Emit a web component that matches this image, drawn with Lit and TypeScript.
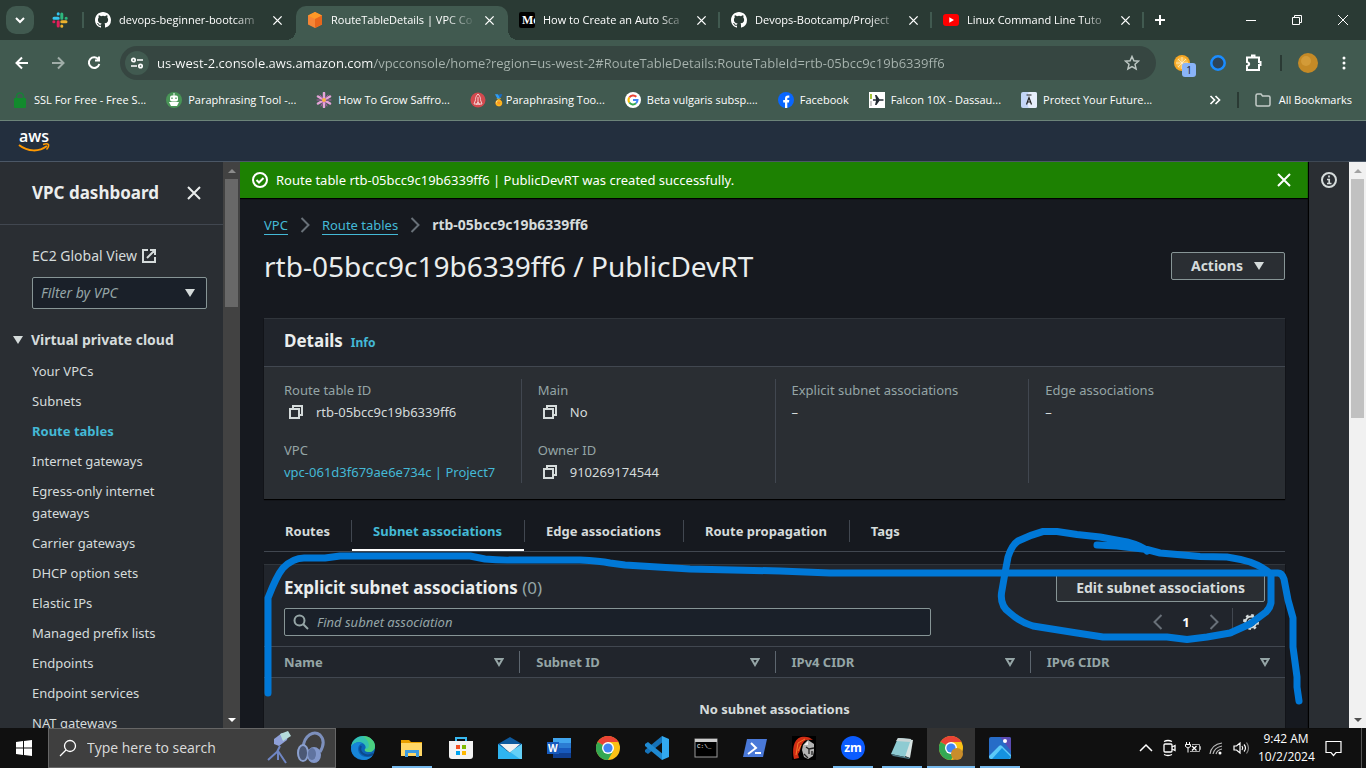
import { LitElement, html, css, svg } from "lit";
import { customElement, state } from "lit/decorators.js";
import { classMap } from "lit/directives/class-map.js";

const cross = (size: number, width: number) => html`<svg width=${size} height=${size} viewBox="0 0 16 16" fill="none" stroke="currentColor" stroke-width=${width}><path d="M2 2l12 12M14 2L2 14"/></svg>`;

const githubIcon = html`<svg width="16" height="16" viewBox="0 0 16 16" fill="#fff"><path d="M8 0C3.58 0 0 3.58 0 8c0 3.54 2.29 6.53 5.47 7.59.4.07.55-.17.55-.38 0-.19-.01-.82-.01-1.49-2.01.37-2.53-.49-2.69-.94-.09-.23-.48-.94-.82-1.13-.28-.15-.68-.52-.01-.53.63-.01 1.08.58 1.23.82.72 1.21 1.87.87 2.33.66.07-.52.28-.87.51-1.07-1.78-.2-3.64-.89-3.64-3.95 0-.87.31-1.59.82-2.15-.08-.2-.36-1.02.08-2.12 0 0 .67-.21 2.2.82a7.6 7.6 0 014 0c1.53-1.04 2.2-.82 2.2-.82.44 1.1.16 1.92.08 2.12.51.56.82 1.27.82 2.15 0 3.07-1.87 3.75-3.65 3.95.29.25.54.73.54 1.48 0 1.07-.01 1.93-.01 2.2 0 .21.15.46.55.38A8.01 8.01 0 0016 8c0-4.42-3.58-8-8-8z"/></svg>`;

const slackIcon = html`<svg width="16" height="16" viewBox="0 0 16 16" stroke-width="3" stroke-linecap="round"><path d="M6.2 1.8v.1M2 6.2h4.2" stroke="#36c5f0"/><path d="M9.8 2v4.2M14.2 6.2h-.1" stroke="#2eb67d"/><path d="M14 9.8H9.8M9.8 14.2v-.1" stroke="#ecb22e"/><path d="M6.2 14V9.8M1.8 9.8h.1" stroke="#e01e5a"/></svg>`;

const vpcIcon = html`<svg width="16" height="16" viewBox="0 0 16 16"><path d="M8 0l7 3.5v9L8 16l-7-3.500v-9z" fill="#f58536"/><path d="M1 3.500L8 0l7 3.500L8 7z" fill="#fd9827"/><path d="M8 7l7-3.500v9L8 16z" fill="#e8661b"/></svg>`;

const mediumIcon = html`<svg width="16" height="16" viewBox="0 0 16 16"><rect width="16" height="16" rx="2" fill="#000"/><text x="3" y="12" font-family="Liberation Serif, serif" font-weight="bold" font-size="12" fill="#fff">Mc</text></svg>`;

const youtubeIcon = html`<svg width="16" height="16" viewBox="0 0 16 16"><rect y="2" width="16" height="12" rx="3" fill="#f00"/><path d="M6.300 5.300L11 8l-4.700 2.700z" fill="#fff"/></svg>`;

const chromeIcon = (badge = false) => html`<svg width="24" height="24" viewBox="0 0 24 24"><circle cx="12" cy="12" r="12" fill="#fbc116"/><path d="M12 12L1.600 6A12 12 0 0 1 22.400 6z" fill="#ea4335"/><path d="M12 12L1.600 6A12 12 0 0 0 12 24l5.200-9z" fill="#34a853"/><path d="M12 6h10.400L17 14z" fill="#fbc116"/><circle cx="12" cy="12" r="6" fill="#fff"/><circle cx="12" cy="12" r="4.600" fill="#4285f4"/>${badge ? svg`<circle cx="18" cy="18" r="6" fill="#c98d2b"/>` : ""}</svg>`;

const copyIcon = html`<svg width="16" height="16" viewBox="0 0 16 16" fill="none" stroke="currentColor" stroke-width="2"><path d="M2 5h9v9H2z"/><path d="M5 5V2h9v9h-3"/></svg>`;

const chevron = (flip = false, size = 16) => html`<svg width=${size} height=${size} viewBox="0 0 16 16" fill="none" stroke="currentColor" stroke-width="2"><path d=${flip ? "M11.500 1L4.500 8l7 7" : "M4.500 1l7 7-7 7"}/></svg>`;

const solidTriangle = html`<svg width="12" height="10" viewBox="0 0 12 10"><path d="M1 1h10L6 9z" fill="currentColor"/></svg>`;

const openTriangle = html`<svg width="10" height="9" viewBox="0 0 10 9"><path d="M1.500 1h7L5 7z" fill="none" stroke="currentColor" stroke-width="2"/></svg>`;

const TABS = [
  { title: "devops-beginner-bootcam", icon: githubIcon, active: false, rule: false },
  { title: "RouteTableDetails | VPC Co", icon: vpcIcon, active: true, rule: false },
  { title: "How to Create an Auto Sca", icon: mediumIcon, active: false, rule: true },
  { title: "Devops-Bootcamp/Project", icon: githubIcon, active: false, rule: true },
  { title: "Linux Command Line Tuto", icon: youtubeIcon, active: false, rule: true },
];

const BOOKMARKS = [
  { label: "SSL For Free - Free S...", icon: html`<svg width="16" height="16" viewBox="0 0 16 16"><path d="M4.500 7V4.500a3.500 3.500 0 0 1 7 0V7" fill="none" stroke="#188038" stroke-width="1.500"/><rect x="2" y="6" width="12" height="10" rx="1" fill="#128a2d"/></svg>` },
  { label: "Paraphrasing Tool -...", icon: html`<svg width="16" height="16" viewBox="0 0 16 16"><circle cx="8" cy="8" r="8" fill="#499557"/><path d="M8 1v3" stroke="#fff"/><rect x="4" y="3.500" width="8" height="6" rx="2" fill="#fff"/><path d="M6 5.500v1.500M10 5.500v1.500" stroke="#499557" stroke-width="1.300"/><path d="M3 10h10l-2 4H5z" fill="#fff"/></svg>` },
  { label: "How To Grow Saffro...", icon: html`<svg width="16" height="16" viewBox="0 0 16 16" stroke-linecap="round"><path d="M8 1v14M2 4.500l12 7M14 4.500l-12 7" stroke="#e5a4d8" stroke-width="2.500"/><path d="M8 8L4 3M8 8l4-5M8 8H1M8 8h7M8 8l-3 6M8 8l3 6" stroke="#b05aa8"/><circle cx="8" cy="8" r="2" fill="#f6b33f"/></svg>` },
  { label: "🏅Paraphrasing Too...", icon: html`<svg width="16" height="16" viewBox="0 0 16 16"><circle cx="8" cy="8" r="7.500" fill="#d3494e"/><path d="M8 2c3 3 2.500 6 2.500 6l1.500 4H4l1.500-4S5 5 8 2zM8 5v8M6 13l2-3 2 3" fill="none" stroke="#f5cfd0"/></svg>` },
  { label: "Beta vulgaris subsp....", icon: html`<svg width="16" height="16" viewBox="0 0 16 16" fill="none" stroke-width="2"><circle cx="8" cy="8" r="8" fill="#fff" stroke="none"/><path d="M4.300 5.500A4.500 4.500 0 0 1 11.300 4.800" stroke="#ea4335"/><path d="M4.300 5.500a4.500 4.500 0 0 0 0 5" stroke="#fbbc05"/><path d="M4.300 10.500a4.500 4.500 0 0 0 6.700.800" stroke="#34a853"/><path d="M11 11.300A4.500 4.500 0 0 0 12.500 8H8" stroke="#4285f4"/></svg>` },
  { label: "Facebook", icon: html`<svg width="16" height="16" viewBox="0 0 16 16"><circle cx="8" cy="8" r="8" fill="#0866ff"/><path d="M7 16v-5.500H5.200V8H7V6.700C7 4.500 8 3.500 10 3.500l1.300.1v2.100h-1C9.500 5.700 9.300 6 9.300 6.800V8h2l-.4 2.500H9.300V16z" fill="#fff"/></svg>` },
  { label: "Falcon 10X - Dassau...", icon: html`<svg width="16" height="16" viewBox="0 0 16 16"><rect width="16" height="16" fill="#fff"/><path d="M1 2h2v5H1z" fill="#a6c43c"/><path d="M1 9h2v5H1z" fill="#ccc"/><path d="M4 7.300h3L6 3h1.500l3 4.300H14l1 .700-1 .700h-3.500l-3 4.300H6l1-4.300H4z" fill="#222b33"/></svg>` },
  { label: "Protect Your Future...", icon: html`<svg width="16" height="16" viewBox="0 0 16 16"><rect width="16" height="16" rx="2" fill="#c3d6f6"/><rect x="7" width="9" height="16" rx="2" fill="#e6eefb"/><path d="M5.500 3h5M5.500 12.500L8 5.500l2.500 7M6.500 10h3" fill="none" stroke="#222" stroke-width="1.200"/></svg>` },
];

const NAV = ["Your VPCs", "Subnets", "Route tables", "Internet gateways", "Egress-only internet gateways", "Carrier gateways", "DHCP option sets", "Elastic IPs", "Managed prefix lists", "Endpoints", "Endpoint services", "NAT gateways"];

const SECTIONS = ["Routes", "Subnet associations", "Edge associations", "Route propagation", "Tags"];

const COLUMNS = ["Name", "Subnet ID", "IPv4 CIDR", "IPv6 CIDR"];

const APPS = [
  { name: "Edge", state: "", icon: html`<svg width="24" height="24" viewBox="0 0 24 24"><circle cx="12" cy="12" r="12" fill="#0c64b8"/><path d="M0 11C1 4 6 0 12 0c7 0 12 5 12 10 0 4-3 6-6 6-3 0-5-1-4-3 1-1 1-3-1-5C9 5 3 6 0 11z" fill="#33c1b0"/><path d="M12 0c7 0 12 5 12 10 0 4-3 6-6 6-3 0-5-1-4-3 5 1 6-7-2-13z" fill="#54d66c" opacity=".7"/><path d="M0 12c1-5 7-7 12-5-6 1-7 9-1 13 4 2 8 1 11-1-3 5-9 6-13 4C3 22 0 17 0 12z" fill="#1785d8"/><path d="M10 10c-3 6 4 12 12 8" fill="none" stroke="#0c4a8c" stroke-width="2"/></svg>` },
  { name: "File Explorer", state: "open", icon: html`<svg width="24" height="24" viewBox="0 0 24 24"><path d="M1 4h8l2 2h11v14H1z" fill="#e9a000"/><path d="M1 7h21v13H1z" fill="#ffd766"/><path d="M5 21v-7h14v7h-3v-4H8v4z" fill="#3d9be0"/></svg>` },
  { name: "Store", state: "", icon: html`<svg width="24" height="24" viewBox="0 0 24 24"><path d="M7 6V2h10v4" fill="none" stroke="#38b8ef" stroke-width="2"/><path d="M0 5h24v15a3 3 0 0 1-3 3H3a3 3 0 0 1-3-3z" fill="#f3f3f3"/><path d="M7 9h4v4H7z" fill="#f25022"/><path d="M13 9h4v4h-4z" fill="#7fba00"/><path d="M7 15h4v4H7z" fill="#00a4ef"/><path d="M13 15h4v4h-4z" fill="#ffb900"/></svg>` },
  { name: "Mail", state: "", icon: html`<svg width="24" height="24" viewBox="0 0 24 24"><path d="M0 8l12-7 12 7v6H0z" fill="#0e5a9e"/><path d="M2 8h20l-10 9z" fill="#f1f1f1"/><path d="M0 8l12 9 12-9v15H0z" fill="#2fb4f0"/><path d="M24 8L12 16l10 7h2z" fill="#64d0f7"/></svg>` },
  { name: "Word", state: "", icon: html`<svg width="24" height="24" viewBox="0 0 24 24"><path d="M6 2h18v5H6z" fill="#41a5ee"/><path d="M6 7h18v5H6z" fill="#2b7cd3"/><path d="M6 12h18v5H6z" fill="#185abd"/><path d="M6 17h18v5H6z" fill="#103f91"/><path d="M0 6h12v12H0z" fill="#185abd"/><text x="1" y="16" font-family="Open Sans, sans-serif" font-weight="bold" font-size="10" fill="#fff">W</text></svg>` },
  { name: "Chrome", state: "", icon: chromeIcon() },
  { name: "Visual Studio Code", state: "", icon: html`<svg width="24" height="24" viewBox="0 0 24 24"><path d="M17 0l2 5L3 18l-3-2v-2z" fill="#1572b8"/><path d="M17 24l2-5L3 6 0 8v2z" fill="#1f8ad2"/><path d="M17 0l7 3v18l-7 3z" fill="#32a9f0"/></svg>` },
  { name: "Command Prompt", state: "", icon: html`<svg width="24" height="24" viewBox="0 0 24 24"><rect x="1" y="3" width="22" height="18" fill="#000" stroke="#999"/><path d="M1 3h22v3H1z" fill="#ccc"/><text x="3" y="12" font-family="Liberation Mono, monospace" font-size="6" fill="#fff">C:\\_</text></svg>` },
  { name: "PowerShell", state: "", icon: html`<svg width="24" height="24" viewBox="0 0 24 24"><path d="M4 3h20l-4 18H0z" fill="#4a79d8"/><path d="M8 7l5 5-8 6M12 17h6" fill="none" stroke="#fff" stroke-width="2"/></svg>` },
  { name: "Knight", state: "", icon: html`<svg width="24" height="24" viewBox="0 0 24 24"><rect width="24" height="24" fill="#000"/><path d="M2 23C0 15 1 3 9 1c5-1 9 0 12 3-5-1-9 0-10 3-3 3-2 8-5 11l1 4z" fill="#d22d14"/><path d="M4 19L6 7l7-4M6 15l3-6" fill="none" stroke="#f47b2a"/><path d="M11 9l5-5 6 4v7l-1 5-5 3-4-2-2-7z" fill="#b4b4b4"/><path d="M14 11l3 2 5-1M17 13v5M20 15v4M12 18l4 4" fill="none" stroke="#222" stroke-width="1.300"/><path d="M12 9l4-4v4z" fill="#eee"/></svg>` },
  { name: "Zoom", state: "open", icon: html`<svg width="24" height="24" viewBox="0 0 24 24"><circle cx="12" cy="12" r="12" fill="#0b5cff"/><text x="12" y="16" text-anchor="middle" font-family="Open Sans, sans-serif" font-weight="bold" font-size="12" fill="#fff">zm</text></svg>` },
  { name: "Notepad", state: "open", icon: html`<svg width="24" height="24" viewBox="0 0 24 24"><path d="M8 2l15 2-3 18-5-2z" fill="#d8e4e2"/><path d="M8 2l13 1-6 18L1 18z" fill="#8ecbd2"/><path d="M8 2l13 1-1 3L6 5z" fill="#c9d4d4"/><path d="M1 18l14 3 5 1-1 1-16-3z" fill="#4d7884"/></svg>` },
  { name: "Chrome window", state: "current", icon: chromeIcon(true) },
  { name: "Photos", state: "open", icon: html`<svg width="24" height="24" viewBox="0 0 24 24"><rect x="1" y="1" width="22" height="22" rx="2" fill="#276cc7"/><path d="M12 1h9a2 2 0 0 1 2 2v12z" fill="#5b4bb3"/><path d="M1 20l10-10a2 2 0 0 1 3 0l9 9v2a2 2 0 0 1-2 2H3a2 2 0 0 1-2-2z" fill="#5cc9f7"/><path d="M4 23L14 12l9 9-2 2z" fill="#1592e0"/><circle cx="17" cy="5" r="2" fill="#fff"/></svg>` },
];

@customElement("browser-chrome")
class BrowserChrome extends LitElement {
  static styles = css`
    :host { display: block; font: 11px/16px "Open Sans", "Noto Sans", sans-serif; color: #fff; background: #415a50; border-bottom: 1px solid #6c8479; }
    button { font: inherit; color: inherit; background: none; border: 0; padding: 0; display: grid; place-items: center; }
    svg { display: block; flex: none; }
    .strip { display: flex; height: 40px; background: #2a3a34; align-items: flex-end; }
    .chooser { width: 28px; height: 28px; border-radius: 10px; background: #415a50; margin: 0 0 6px 6px; }
    .pinned { width: 48px; height: 40px; padding-left: 4px; }
    .rule { width: 2px; height: 16px; background: #415a50; flex: none; }
    .strip > .rule { margin-bottom: 12px; }
    .tab { position: relative; display: flex; align-items: center; gap: 8px; flex: 0 1 212px; min-width: 0; height: 34px; padding: 0 13px 6px 11px; box-sizing: border-box; }
    .tab .title { flex: 1; min-width: 0; overflow: hidden; white-space: nowrap; mask-image: linear-gradient(90deg, #000 115px, transparent 145px); }
    .tab .end { position: absolute; right: 0; top: 6px; }
    .active { background: #415a50; border-radius: 10px 10px 0 0; }
    .active::before, .active::after { content: ""; position: absolute; bottom: 0; width: 10px; height: 10px; }
    .active::before { left: -10px; background: radial-gradient(circle at 0 0, transparent 10px, #415a50 10px); }
    .active::after { right: -10px; background: radial-gradient(circle at 100% 0, transparent 10px, #415a50 10px); }
    .add { width: 32px; height: 40px; }
    .window { display: flex; margin-left: auto; }
    .window button { width: 46px; height: 40px; }
    .toolbar { display: flex; align-items: center; height: 40px; box-sizing: border-box; padding: 6px 4px 0 4px; }
    .toolbar > button { width: 36px; height: 34px; }
    .dim { opacity: .5; }
    .address { display: flex; align-items: center; flex: 1; height: 34px; margin: 0 8px 0 8px; padding: 0 16px 0 5px; border-radius: 17px; background: #364641; gap: 8px; }
    .site { width: 24px; height: 24px; border-radius: 12px; background: #415a50; }
    .address input { flex: 1; min-width: 0; border: 0; outline: 0; padding: 0; font: 13px/20px "Open Sans", "Noto Sans", sans-serif; color: transparent; background: linear-gradient(90deg, #fff 217px, #a9b5b0 217px); background-clip: text; -webkit-background-clip: text; }
    .badge { position: relative; }
    .count { position: absolute; right: 4px; bottom: 3px; width: 14px; height: 14px; border-radius: 3px; background: #8ab4f8; color: #202124; font-size: 10px; line-height: 14px; text-align: center; }
    .bar { width: 2px; height: 16px; background: #2a3a34; margin: 0 8px; }
    .bookmarks { display: flex; align-items: center; height: 40px; padding: 0 14px 0 12px; }
    .bookmarks a { display: flex; align-items: center; gap: 6px; color: inherit; text-decoration: none; white-space: nowrap; margin-right: 20px; }
    .bookmarks .more { margin-left: auto; width: 28px; height: 28px; }
    .bookmarks a.all { margin: 0 0 0 8px; gap: 8px; }
  `;

  render() {
    return html`
      <div class="strip">
        <button class="chooser" aria-label="Search tabs"><svg width="16" height="16" viewBox="0 0 16 16" fill="none" stroke="#fff" stroke-width="2"><path d="M4 6l4 4 4-4"/></svg></button>
        <button class="pinned" aria-label="Slack">${slackIcon}</button>
        <span class="rule"></span>
        ${TABS.map((t) => html`<div class=${classMap({ tab: true, active: t.active })}>
          ${t.icon}<span class="title">${t.title}</span>
          <button aria-label="Close tab">${cross(11, 2)}</button>
          ${t.rule ? html`<span class="rule end"></span>` : ""}
        </div>`)}
        <button class="add" aria-label="New tab"><svg width="12" height="12" viewBox="0 0 12 12" stroke="#fff" stroke-width="2"><path d="M6 1v10M1 6h10"/></svg></button>
        <div class="window">
          <button aria-label="Minimize"><svg width="10" height="10" viewBox="0 0 10 10" stroke="#fff"><path d="M0 5.500h10"/></svg></button>
          <button aria-label="Restore"><svg width="10" height="10" viewBox="0 0 10 10" fill="none" stroke="#fff"><path d="M.5 2.500h7v7h-7zM2.500 2.500v-2h7v7h-2"/></svg></button>
          <button aria-label="Close"><svg width="10" height="10" viewBox="0 0 10 10" stroke="#fff"><path d="M0 0l10 10M10 0L0 10"/></svg></button>
        </div>
      </div>
      <div class="toolbar">
        <button aria-label="Back"><svg width="16" height="16" viewBox="0 0 16 16" fill="none" stroke="#fff" stroke-width="2"><path d="M14 8H3M8 2.500L2.500 8 8 13.500"/></svg></button>
        <button class="dim" aria-label="Forward"><svg width="16" height="16" viewBox="0 0 16 16" fill="none" stroke="#fff" stroke-width="2"><path d="M2 8h11M8 2.500L13.500 8 8 13.500"/></svg></button>
        <button aria-label="Reload"><svg width="16" height="16" viewBox="0 0 16 16" fill="none" stroke="#fff" stroke-width="2"><path d="M12.500 4.500A5.300 5.300 0 1 0 13.300 9M13 1.500v4H9"/></svg></button>
        <div class="address">
          <button class="site" aria-label="Site information"><svg width="14" height="14" viewBox="0 0 14 14" fill="none" stroke="#fff" stroke-width="1.700"><circle cx="3.500" cy="4" r="1.700"/><path d="M7 4h6M1 10h6"/><circle cx="10.500" cy="10" r="1.700"/></svg></button>
          <input aria-label="Address" value="us-west-2.console.aws.amazon.com/vpcconsole/home?region=us-west-2#RouteTableDetails:RouteTableId=rtb-05bcc9c19b6339ff6">
          <button aria-label="Bookmark"><svg width="16" height="16" viewBox="0 0 16 16" fill="none" stroke="#bcc6c2" stroke-width="1.500"><path d="M8 1.500l1.900 4.300 4.600.4-3.500 3.100 1.100 4.600L8 11.500l-4.100 2.400L5 9.300 1.500 6.200l4.600-.4z"/></svg></button>
        </div>
        <button class="badge" aria-label="Extension, 1 item"><svg width="16" height="16" viewBox="0 0 16 16"><circle cx="8" cy="8" r="8" fill="#f5a623"/><circle cx="8" cy="8" r="6" fill="#fbbf4d"/><path d="M8 2v12M2 8h12M4 4l8 8M12 4l-8 8" stroke="#fff3d6" stroke-width=".7"/></svg><span class="count">1</span></button>
        <button aria-label="Extension"><svg width="16" height="16" viewBox="0 0 16 16"><circle cx="8" cy="8" r="6.700" fill="#2d4357" stroke="#1a8cff" stroke-width="2.500"/></svg></button>
        <button aria-label="Extensions"><svg width="18" height="18" viewBox="0 0 18 18" fill="none" stroke="#fff" stroke-width="2"><path d="M2 3.500h12v4.500h1.500v3H14v5H2v-4c3-1 3-3 0-4z"/><path d="M7 3V1.500h2.500V3"/></svg></button>
        <span class="bar"></span>
        <button aria-label="Profile"><svg width="20" height="20" viewBox="0 0 20 20"><circle cx="10" cy="10" r="10" fill="#c58a26"/><circle cx="8" cy="8" r="5" fill="#d39b38"/></svg></button>
        <button aria-label="Menu"><svg width="4" height="16" viewBox="0 0 4 16" fill="#fff"><circle cx="2" cy="3" r="1.500"/><circle cx="2" cy="8" r="1.500"/><circle cx="2" cy="13" r="1.500"/></svg></button>
      </div>
      <div class="bookmarks">
        ${BOOKMARKS.map((b) => html`<a href="#">${b.icon}<span>${b.label}</span></a>`)}
        <button class="more" aria-label="More bookmarks"><svg width="12" height="10" viewBox="0 0 12 10" fill="none" stroke="#fff" stroke-width="1.700"><path d="M1.500 1l4 4-4 4M6.500 1l4 4-4 4"/></svg></button>
        <span class="bar"></span>
        <a class="all" href="#"><svg width="16" height="14" viewBox="0 0 16 14" fill="none" stroke="#c3ccc8" stroke-width="1.500"><path d="M1 2.500a1.500 1.500 0 0 1 1.500-1.500H6l1.500 2h6A1.500 1.500 0 0 1 15 4.500v7a1.500 1.500 0 0 1-1.500 1.500h-11A1.500 1.500 0 0 1 1 11.500z"/></svg><span>All Bookmarks</span></a>
      </div>`;
  }
}

@customElement("aws-console")
class AwsConsole extends LitElement {
  @state() section = "Subnet associations";

  static styles = css`
    :host { display: flex; flex-direction: column; font: 13px/22px "Noto Sans", "Open Sans", sans-serif; color: #d5dbdb; min-height: 0; }
    button, input, select { font: inherit; color: inherit; }
    button { background: none; border: 0; padding: 0; }
    a { color: #44b9d6; text-decoration: none; }
    svg { display: block; flex: none; }
    .top { height: 40px; flex: none; background: #232f3e; border-bottom: 1px solid #4b5766; display: flex; align-items: center; padding-left: 18px; }
    .page { display: flex; flex: 1; min-height: 0; }
    .side { flex: 0 0 223px; background: #2a2e33; overflow: hidden; }
    .side header { display: flex; align-items: center; height: 62px; padding-left: 32px; border-bottom: 1px solid #414750; gap: 27px; color: #eaeded; }
    .side h2 { margin: 0; font-size: 17px; }
    .links { padding: 20px 16px 0 32px; }
    .links a { color: #d5dbdb; }
    .links .ec2 { display: flex; align-items: center; gap: 5px; font-size: 14px; }
    .filter { display: grid; margin-top: 10px; align-items: center; }
    .filter select { grid-area: 1 / 1; appearance: none; height: 32px; border: 1px solid #879596; border-radius: 2px; background: #1a2029; padding: 0 8px; font-style: italic; font-size: 14px; color: #95a5a6; }
    .filter svg { grid-area: 1 / 1; justify-self: end; margin-right: 11px; pointer-events: none; }
    .group { display: flex; align-items: center; gap: 7px; margin: 20px 0 9px -20px; font-size: 14px; font-weight: bold; }
    .links ul { list-style: none; margin: 0; padding: 0; display: grid; gap: 8px; }
    .links ul a { display: block; padding-right: 36px; }
    .links ul a.on { color: #44b9d6; font-weight: bold; }
    .scroll { flex: 0 0 17px; display: flex; flex-direction: column; align-items: center; background: #424242; color: #8b8b8b; box-sizing: border-box; }
    .scroll svg { padding: 7px 0 6px; }
    .scroll i { width: 13px; background: #686868; flex: 0 0 128px; margin-bottom: auto; }
    .scroll.light { background: #f1f1f1; }
    .scroll.light i { background: #c1c1c1; flex-basis: 239px; }
    .main { position: relative; flex: 1; min-width: 0; background: #16191f; overflow: hidden; }
    .flash { display: flex; align-items: center; height: 36px; background: #1d8102; color: #fff; padding: 0 17px 0 12px; gap: 8px; box-shadow: 0 1px 1px #000; }
    .flash button { margin-left: auto; }
    .content { padding: 16px 24px 0; }
    .crumbs { display: flex; align-items: center; gap: 8px; font-weight: bold; }
    .crumbs svg { color: #687078; margin: 0 1px; }
    .crumbs a { font-weight: normal; line-height: 18px; border-bottom: 1px solid #44b9d6; }
    .crumbs span { font-size: 14px; }
    .head { display: flex; align-items: center; justify-content: space-between; height: 60px; }
    h1 { margin: 0; font-size: 28px; line-height: 36px; font-weight: normal; color: #eaeded; }
    .btn { height: 28px; padding: 0 19px; border: 1px solid #879596; border-radius: 2px; background: #2a2e33; font-size: 14px; font-weight: bold; display: flex; align-items: center; gap: 10px; }
    .card { background: #2a2e33; border-top: 1px solid #30353b; box-shadow: 0 1px 1px #000; }
    .details { margin-top: 22px; }
    .details header { display: flex; align-items: baseline; gap: 8px; line-height: 44px; padding-left: 20px; background: #21252c; border-bottom: 1px solid #414750; box-sizing: border-box; height: 48px; }
    h3 { margin: 0; font-size: 17px; color: #eaeded; }
    .info { font-size: 12px; font-weight: bold; }
    .facts { display: grid; grid-template-columns: repeat(4, 1fr); padding: 12px 3px 16px; }
    .facts dl { margin: 0; padding-left: 16px; border-left: 1px solid #414750; height: 104px; }
    .facts dl:first-child { border-color: transparent; }
    .facts dt { color: #95a5a6; }
    .facts dd { margin: 0 0 16px; display: flex; align-items: center; gap: 12px; white-space: nowrap; }
    .facts button { margin-left: 4px; }
    .tabs { display: flex; border-bottom: 1px solid #414750; margin-top: 13px; height: 39px; }
    .tabs button { position: relative; font-weight: bold; padding: 0 22px 2px; height: 39px; }
    .tabs button:first-child { padding-left: 21px; padding-right: 21px; }
    .tabs button + button::before { content: ""; position: absolute; left: 0; top: 8px; height: 22px; width: 1px; background: #414750; }
    .tabs button.on { color: #44b9d6; }
    .tabs button.on::after { content: ""; position: absolute; left: 1px; right: 0; bottom: 0; height: 2px; background: #fff; }
    .assoc { margin-top: 12px; }
    .tools { background: #21252c; padding: 9px 20px 10px; }
    .row { display: flex; align-items: center; justify-content: space-between; }
    .row h3 { line-height: 28px; }
    .row h3 span { color: #95a5a6; font-weight: normal; }
    .row + .row { margin-top: 6px; }
    .find { display: flex; align-items: center; gap: 8px; box-sizing: border-box; flex: 0 0 66%; height: 28px; border: 1px solid #879596; border-radius: 2px; background: #1a2029; padding: 0 8px; color: #95a5a6; }
    .find input { flex: 1; background: none; border: 0; outline: 0; padding: 0; }
    .find input::placeholder { color: #95a5a6; font-style: italic; }
    .pager { display: flex; align-items: center; color: #687078; padding-right: 5px; }
    .pager button, .pager b { width: 28px; display: grid; place-items: center; }
    .pager b { color: #fff; }
    .pager .gear { color: #d5dbdb; margin-left: 4px; border-left: 1px solid #414750; height: 28px; padding-left: 8px; }
    table { width: 100%; border-collapse: collapse; table-layout: fixed; }
    thead { background: #21252c; }
    th { padding: 4px 0; text-align: left; color: #95a5a6; border: solid #414750; border-width: 1px 0; }
    th div { display: flex; align-items: center; justify-content: space-between; height: 22px; padding: 0 15px 0 16px; border-left: 1px solid #5d666f; }
    th:first-child div { border-color: transparent; padding-left: 19px; }
    td { text-align: center; font-weight: bold; padding: 20px 0 60px; }
    .rail { flex: 0 0 40px; background: #2a2e33; box-shadow: -1px 0 1px #000; position: relative; display: flex; justify-content: center; align-items: flex-start; padding-top: 10px; box-sizing: border-box; }
    .ink { position: absolute; left: 0; top: 0; width: 1069px; height: 566px; pointer-events: none; }
  `;

  scrollbar(light: boolean) {
    return html`<div class=${classMap({ scroll: true, light })} aria-hidden="true">
      <svg width="8" height="4" viewBox="0 0 8 4" fill=${light ? "#a3a3a3" : "currentColor"}><path d="M4 0l4 4H0z"/></svg><i></i>
      <svg width="8" height="4" viewBox="0 0 8 4" fill=${light ? "#505050" : "#fff"}><path d="M0 0h8L4 4z"/></svg></div>`;
  }

  render() {
    return html`
      <div class="top"><svg width="32" height="26" viewBox="0 0 32 26" overflow="visible"><text x="1" y="14" font-family="Open Sans, sans-serif" font-weight="600" font-size="16" fill="#fff">aws</text><path d="M1 17c9 7 20 7 28 1" fill="none" stroke="#f90" stroke-width="2"/><path d="M25 16.500c3-1 5-.5 5.500 0 .3 1-.5 3.500-2 5" fill="none" stroke="#f90" stroke-width="1.500"/></svg></div>
      <div class="page">
        <nav class="side">
          <header><h2>VPC dashboard</h2><button aria-label="Close navigation">${cross(16, 2)}</button></header>
          <div class="links">
            <a class="ec2" href="#">EC2 Global View <svg width="14" height="14" viewBox="0 0 14 14" fill="none" stroke="currentColor" stroke-width="2"><path d="M6 1H1v12h12V8M8 1h5v5M13 1L5 9"/></svg></a>
            <div class="filter"><select aria-label="Filter by VPC"><option>Filter by VPC</option></select>${solidTriangle}</div>
            <div class="group">${solidTriangle}<span>Virtual private cloud</span></div>
            <ul>${NAV.map((n) => html`<li><a href="#" class=${classMap({ on: n === "Route tables" })}>${n}</a></li>`)}</ul>
          </div>
        </nav>
        ${this.scrollbar(false)}
        <main class="main">
          <div class="flash"><svg width="16" height="16" viewBox="0 0 16 16" fill="none" stroke="#fff" stroke-width="2"><circle cx="8" cy="8" r="7"/><path d="M4.500 8l2.500 2.500 4.500-4.500"/></svg>
            <span>Route table rtb-05bcc9c19b6339ff6 | PublicDevRT was created successfully.</span>
            <button aria-label="Dismiss">${cross(16, 2)}</button></div>
          <div class="content">
            <div class="crumbs"><a href="#">VPC</a>${chevron()}<a href="#">Route tables</a>${chevron()}<span>rtb-05bcc9c19b6339ff6</span></div>
            <div class="head"><h1>rtb-05bcc9c19b6339ff6 / PublicDevRT</h1><button class="btn">Actions ${solidTriangle}</button></div>
            <section class="card details">
              <header><h3>Details</h3><a class="info" href="#">Info</a></header>
              <div class="facts">
                <dl><dt>Route table ID</dt><dd><button aria-label="Copy ID">${copyIcon}</button>rtb-05bcc9c19b6339ff6</dd><dt>VPC</dt><dd><a href="#">vpc-061d3f679ae6e734c | Project7</a></dd></dl>
                <dl><dt>Main</dt><dd><button aria-label="Copy main">${copyIcon}</button>No</dd><dt>Owner ID</dt><dd><button aria-label="Copy owner">${copyIcon}</button>910269174544</dd></dl>
                <dl><dt>Explicit subnet associations</dt><dd>–</dd></dl>
                <dl><dt>Edge associations</dt><dd>–</dd></dl>
              </div>
            </section>
            <div class="tabs" role="tablist">${SECTIONS.map((s) => html`<button role="tab" aria-selected=${s === this.section} class=${classMap({ on: s === this.section })} @click=${() => (this.section = s)}>${s}</button>`)}</div>
            <section class="card assoc">
              <div class="tools">
                <div class="row"><h3>Explicit subnet associations <span>(0)</span></h3><button class="btn">Edit subnet associations</button></div>
                <div class="row">
                  <label class="find"><svg width="16" height="16" viewBox="0 0 16 16" fill="none" stroke="currentColor" stroke-width="2"><circle cx="6.500" cy="6.500" r="5"/><path d="M10 10l5 5"/></svg><input type="text" aria-label="Find subnet association" placeholder="Find subnet association"></label>
                  <div class="pager"><button aria-label="Previous page">${chevron(true)}</button><b>1</b><button aria-label="Next page">${chevron()}</button>
                    <button class="gear" aria-label="Preferences"><svg width="16" height="16" viewBox="0 0 16 16" fill="none" stroke="currentColor"><circle cx="8" cy="8" r="5.500" stroke-width="2"/><circle cx="8" cy="8" r="7" stroke-width="2" stroke-dasharray="2.750 2.750"/><circle cx="8" cy="8" r="2" stroke-width="2"/></svg></button></div>
                </div>
              </div>
              <table><thead><tr>${COLUMNS.map((c) => html`<th><div>${c}${openTriangle}</div></th>`)}</tr></thead>
                <tbody><tr><td colspan="4">No subnet associations</td></tr></tbody></table>
            </section>
          </div>
          <svg class="ink" viewBox="240 162 1069 566" fill="none" stroke="#0078d7" stroke-width="7" stroke-linecap="round" stroke-linejoin="round" aria-hidden="true">
            <path d="M268 693V598C273 585 278 574 283 568C290 561 297 558 304 558L325 558 340 556H470L485 559Q500 560.500 515 560H580Q600 561 610 563L625 565 690 569 780 571 830 573H1278Q1282 573 1284 579L1288 600 1293 618V647L1297 677V687L1299 701"/>
            <path d="M1097 545L1117 546 1147 549.500 1160 553 1200 556.500 1227 557Q1240 559 1250 562 1266 568 1271 575V603Q1270 608 1266 612L1250 624 1230 633 1207 637 1187 639.500 1167 637H1103L1077 633 1033 626Q1020 622 1010 613 1000 606 1001.500 593L1005 573 1008 557Q1012 545 1018 541 1030 535 1043 531.500H1057L1077 534.500 1100 537 1127 542Q1142 546 1147 551"/>
          </svg>
        </main>
        <aside class="rail"><button aria-label="Info"><svg width="16" height="16" viewBox="0 0 16 16" fill="none" stroke="currentColor" stroke-width="2"><circle cx="8" cy="8" r="7"/><path d="M8 3.500v2M6 7.500h2.200V11M6 11.500h4.500" stroke-width="1.700"/></svg></button></aside>
        ${this.scrollbar(true)}
      </div>`;
  }
}

@customElement("desktop-taskbar")
class DesktopTaskbar extends LitElement {
  static styles = css`
    :host { display: flex; height: 40px; background: #101010; color: #fff; font: 12px/18px "Open Sans", "Noto Sans", sans-serif; }
    button { background: none; border: 0; padding: 0; color: inherit; font: inherit; display: grid; place-items: center; }
    svg { display: block; flex: none; }
    .start { width: 48px; }
    .search { display: flex; align-items: center; flex: 0 0 288px; min-width: 0; box-sizing: border-box; background: #3f3f3f; border: 1px solid #666; padding: 0 8px 0 10px; gap: 10px; color: #dcdcdc; }
    .search input { flex: 1; width: 0; min-width: 0; border: 0; outline: 0; background: none; padding: 0; font: 14px/20px "Open Sans", "Noto Sans", sans-serif; }
    .search input::placeholder { color: #dcdcdc; }
    .apps { display: flex; gap: 1px; margin-left: 3px; }
    .apps button { width: 48px; border-bottom: 2px solid transparent; border-top: 2px solid transparent; box-sizing: border-box; }
    .apps .open { background: linear-gradient(#76b9ed, #76b9ed) bottom / 40px 2px no-repeat border-box; }
    .apps .current { background: #333; border-bottom-color: #76b9ed; border-top-color: #333; }
    .tray { display: flex; align-items: center; margin-left: auto; gap: 8px; }
    .clock { width: 56px; text-align: center; }
    .note { width: 48px; height: 40px; border-right: 1px solid #555; margin-right: 4px; padding-right: 8px; box-sizing: border-box; margin-left: -8px; }
  `;

  render() {
    return html`
      <button class="start" aria-label="Start"><svg width="16" height="16" viewBox="0 0 16 16" fill="#fff"><path d="M0 2l7-1v6.500H0zM8 1l8-1v7.500H8zM0 8.500h7V15l-7-1zM8 8.500h8V16l-8-1z"/></svg></button>
      <label class="search">
        <svg width="18" height="18" viewBox="0 0 18 18" fill="none" stroke="#fff" stroke-width="1.300"><circle cx="11" cy="7" r="5.500"/><path d="M7 11l-6 6"/></svg>
        <input type="text" aria-label="Search" placeholder="Type here to search">
        <svg width="60" height="36" viewBox="0 0 60 36" fill="none"><path d="M13 16l-3 6M11 21L1 30M11 21l8 12M11 21v9" stroke="#6f86c4" stroke-width="2"/><path d="M7 9l8-6 6 2-1 5-8 6-5-2z" fill="#8fa0d8"/><path d="M13 4l8-3 3 5-8 5z" fill="#b5dcdc"/><path d="M36 18C37 5 47 0 53 5c5 5 3 12 0 17" stroke="#7d90bd" stroke-width="3"/><ellipse cx="36" cy="23" rx="5" ry="8" fill="#4b5875" stroke="#8ba0ce" stroke-width="2"/><ellipse cx="47" cy="25" rx="7" ry="8" fill="#8297ca"/><ellipse cx="45" cy="24" rx="4" ry="6" fill="#60739f"/></svg>
      </label>
      <div class="apps">${APPS.map((a) => html`<button class=${a.state} aria-label=${a.name}>${a.icon}</button>`)}</div>
      <div class="tray">
        <button aria-label="Show hidden icons"><svg width="14" height="16" viewBox="0 0 14 16" fill="none" stroke="#fff" stroke-width="1.500"><path d="M1 11l6-6 6 6"/></svg></button>
        <button aria-label="Camera"><svg width="16" height="18" viewBox="0 0 16 18" fill="none" stroke="#fff" stroke-width="1.300"><rect x="3" y="5" width="8" height="8" rx="1"/><path d="M11 8l3-1.500v5L11 10M3 2.500q4-2 8 0M3 15.500q4 2 8 0"/></svg></button>
        <button aria-label="Battery"><svg width="16" height="14" viewBox="0 0 16 14" fill="none" stroke="#fff"><path d="M1.500 1v2M4.500 1v2M.500 3.500h5v2l-2.500 1.500-2.500-1.500zM3 7v4.500"/><path d="M7 3.500h7.500v7H5M14.500 5.500h1v3h-1" stroke="#aaa"/><path d="M7 5l4.500 4.500M11.500 5L7 9.500" stroke-width="1.300"/></svg></button>
        <button aria-label="Network"><svg width="16" height="16" viewBox="0 0 16 16" fill="none" stroke="#bbb" stroke-width="1.200"><path d="M1 14C2 7 6 4 13 3M4 14c1-5 4-7 9-8M7 14c1-3 3-4.500 6-5"/><circle cx="11" cy="13" r="1.500" fill="#fff" stroke="none"/></svg></button>
        <button aria-label="Volume"><svg width="17" height="14" viewBox="0 0 17 14" fill="none" stroke="#fff" stroke-width="1.200"><path d="M1 5h2.500L7 2v10L3.500 9H1zM9 5q1.500 2 0 4M11 3.500q3 3.500 0 7"/><path d="M13.500 1.500q4 5.500 0 11" stroke="#888"/></svg></button>
        <div class="clock">9:42 AM<br>10/2/2024</div>
        <button class="note" aria-label="Notifications"><svg width="17" height="17" viewBox="0 0 17 17" fill="none" stroke="#fff" stroke-width="1.200"><path d="M1 1.500h15v11h-5l-2.500 3-2.500-3H1z"/></svg></button>
      </div>`;
  }
}

@customElement("app-root")
class AppRoot extends LitElement {
  static styles = css`
    :host { display: flex; flex-direction: column; height: 100vh; overflow: hidden; background: #16191f; }
    aws-console { flex: 1; }
    browser-chrome, desktop-taskbar { flex: none; }
  `;
  render() {
    return html`<browser-chrome></browser-chrome><aws-console></aws-console><desktop-taskbar></desktop-taskbar>`;
  }
}
